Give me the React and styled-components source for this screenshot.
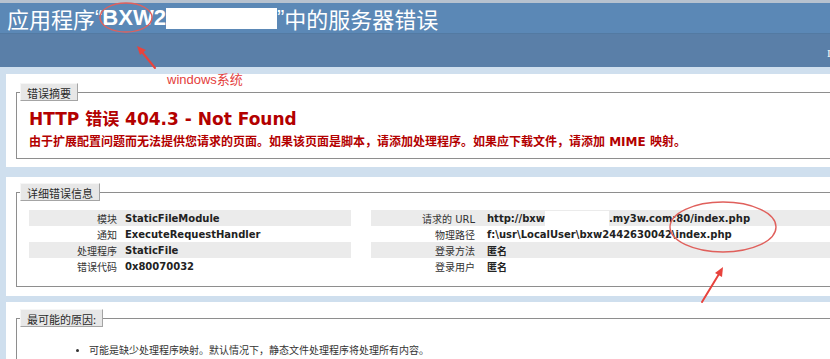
import styled, { createGlobalStyle } from "styled-components";

const GlobalStyle = createGlobalStyle`
  html, body {
    margin: 0;
    padding: 0;
  }
  body {
    width: 830px;
    height: 359px;
    overflow: hidden;
    background: #cfdfee;
    font-family: "DejaVu Sans", "Noto Sans CJK SC", sans-serif;
    color: #222;
  }
`;

const Page = styled.div`
  position: relative;
  width: 830px;
  height: 359px;
  overflow: hidden;
`;

const TopStrip = styled.div`
  height: 3px;
  background: #b7c2cf;
`;

const TitleBar = styled.h1`
  margin: 0;
  height: 30px;
  padding-left: 7px;
  display: flex;
  align-items: center;
  background: #5b88b6;
  color: #fff;
  font-family: "Noto Sans CJK SC", sans-serif;
  font-weight: 400;
  font-size: 22px;
  line-height: 30px;
  white-space: nowrap;
`;

const Latin = styled.span`
  font-family: "Liberation Sans", sans-serif;
  font-weight: ${(p) => (p.bold ? 700 : 400)};
  font-size: 22px;
`;

const Redacted = styled.span`
  display: inline-block;
  width: ${(p) => p.w}px;
  height: ${(p) => p.h}px;
  background: #fff;
  vertical-align: middle;
`;

const SubBar = styled.div`
  height: 34px;
  border-top: 1px solid #537aa2;
  background: #5a7fa8;
  display: flex;
  justify-content: flex-end;
  align-items: center;
  overflow: hidden;
  color: #fff;
  font-family: "Liberation Serif", serif;
  font-size: 11px;
  padding-top: 4px;
  box-sizing: border-box;

  span {
    white-space: nowrap;
    margin-right: -143px;
  }
`;

const Content = styled.div`
  padding: 7px 0 0 6px;
`;

const Panel = styled.div`
  background: #fff;
  padding: ${(p) => p.top}px 0 ${(p) => p.bottom}px 10px;
  margin-bottom: ${(p) => p.gap}px;
`;

const Fieldset = styled.fieldset`
  margin: 0;
  padding: 0;
  min-width: 0;
  border: 1px solid #8e8e8e;
  border-right: none;
`;

const Legend = styled.legend`
  margin-left: 3px;
  padding: 0 6px;
  height: 18px;
  line-height: 18px;
  box-sizing: border-box;
  background: #e7e7e7;
  border: 1px solid;
  border-color: #f6f6f6 #a4a4a4 #a4a4a4 #f6f6f6;
  font-family: "Noto Sans CJK SC", sans-serif;
  font-size: 11px;
  color: #2a2a2a;
`;

const Body = styled.div`
  padding: ${(p) => p.top || 0}px 0 ${(p) => p.bottom || 0}px 12px;
`;

const ErrorTitle = styled.h3`
  margin: 0;
  color: #b30000;
  font-size: 17px;
  font-weight: bold;
  line-height: 22px;
`;

const ErrorText = styled.h4`
  margin: 3px 0 0;
  color: #b30000;
  font-size: 12px;
  font-weight: bold;
  line-height: 18px;
  white-space: nowrap;
`;

const Details = styled.div`
  display: flex;
  gap: 20px;
`;

const InfoTable = styled.table`
  border-collapse: collapse;
  width: ${(p) => (p.w ? `${p.w}px` : "auto")};
  flex: ${(p) => (p.w ? "none" : 1)};
  font-size: 10px;

  tr:nth-child(odd) {
    background: #ebebeb;
  }

  th {
    width: ${(p) => p.labelW}px;
    height: 16px;
    padding: 0 8px 0 0;
    text-align: right;
    font-weight: normal;
    color: #333;
    font-family: "DejaVu Sans", "Noto Sans CJK SC", sans-serif;
    white-space: nowrap;
  }

  td {
    height: 16px;
    padding: 0 0 0 ${(p) => p.valuePad}px;
    font-weight: bold;
    color: #222;
    white-space: nowrap;
  }
`;

const ReasonList = styled.ul`
  margin: 0;
  padding: 17px 0 0 72px;
  font-size: 10px;
  line-height: 14px;
  color: #333;
`;

const Overlay = styled.svg`
  position: absolute;
  top: 0;
  left: 0;
  pointer-events: none;
`;

const Note = styled.span`
  position: absolute;
  left: 167px;
  top: 69px;
  color: #e4403c;
  font-family: "Liberation Sans", "Noto Sans CJK SC", sans-serif;
  font-size: 13px;
`;

const leftRows = [
  ["模块", "StaticFileModule"],
  ["通知", "ExecuteRequestHandler"],
  ["处理程序", "StaticFile"],
  ["错误代码", "0x80070032"],
];

const rightRows = [
  ["请求的 URL", "url"],
  ["物理路径", "f:\\usr\\LocalUser\\bxw2442630042\\index.php"],
  ["登录方法", "匿名"],
  ["登录用户", "匿名"],
];

const App = () => {
  return (
    <Page>
      <GlobalStyle />
      <TopStrip />
      <TitleBar>
        应用程序<Latin>“</Latin>
        <Latin bold>BXW2</Latin>
        <Redacted w={111} h={21} />
        <Latin>”</Latin>中的服务器错误
      </TitleBar>
      <SubBar>
        <span>Internet Information Services 7.5</span>
      </SubBar>
      <Content>
        <Panel top={9} bottom={8} gap={10}>
          <Fieldset>
            <Legend>错误摘要</Legend>
            <Body top={7} bottom={7}>
              <ErrorTitle>HTTP 错误 404.3 - Not Found</ErrorTitle>
              <ErrorText>
                由于扩展配置问题而无法提供您请求的页面。如果该页面是脚本，请添加处理程序。如果应下载文件，请添加 MIME 映射。
              </ErrorText>
            </Body>
          </Fieldset>
        </Panel>
        <Panel top={6} bottom={9} gap={6}>
          <Fieldset>
            <Legend>详细错误信息</Legend>
            <Body top={9} bottom={12}>
              <Details>
                <InfoTable w={322} labelW={88} valuePad={0}>
                  <tbody>
                    {leftRows.map(([k, v]) => (
                      <tr key={k}>
                        <th>{k}</th>
                        <td>{v}</td>
                      </tr>
                    ))}
                  </tbody>
                </InfoTable>
                <InfoTable labelW={104} valuePad={4}>
                  <tbody>
                    {rightRows.map(([k, v]) => (
                      <tr key={k}>
                        <th>{k}</th>
                        <td>
                          {v === "url" ? (
                            <>
                              http://bxw
                              <Redacted w={64} h={15} />
                              .my3w.com:80/index.php
                            </>
                          ) : (
                            v
                          )}
                        </td>
                      </tr>
                    ))}
                  </tbody>
                </InfoTable>
              </Details>
            </Body>
          </Fieldset>
        </Panel>
        <Panel top={7} bottom={8} gap={0}>
          <Fieldset>
            <Legend>最可能的原因:</Legend>
            <ReasonList>
              <li>可能是缺少处理程序映射。默认情况下，静态文件处理程序将处理所有内容。</li>
              <li>您要使用的功能可能尚未安装。</li>
            </ReasonList>
          </Fieldset>
        </Panel>
      </Content>

      <Overlay width="830" height="359" viewBox="0 0 830 359">
        <g fill="none" stroke="#e0605c" strokeWidth="1.4">
          <ellipse cx="126" cy="17.5" rx="26" ry="14.5" />
          <ellipse cx="723" cy="227" rx="53" ry="25" />
        </g>
        <g stroke="#e8433d" strokeWidth="2" fill="#e8433d" strokeLinecap="round">
          <line x1="155" y1="68" x2="142" y2="52" />
          <polygon points="137,46 146,50 140,55" stroke="none" />
          <line x1="702" y1="302" x2="719" y2="274" />
          <polygon points="723,267 722,277 715,273" stroke="none" />
        </g>
      </Overlay>
      <Note>windows系统</Note>
    </Page>
  );
};

export default App;
